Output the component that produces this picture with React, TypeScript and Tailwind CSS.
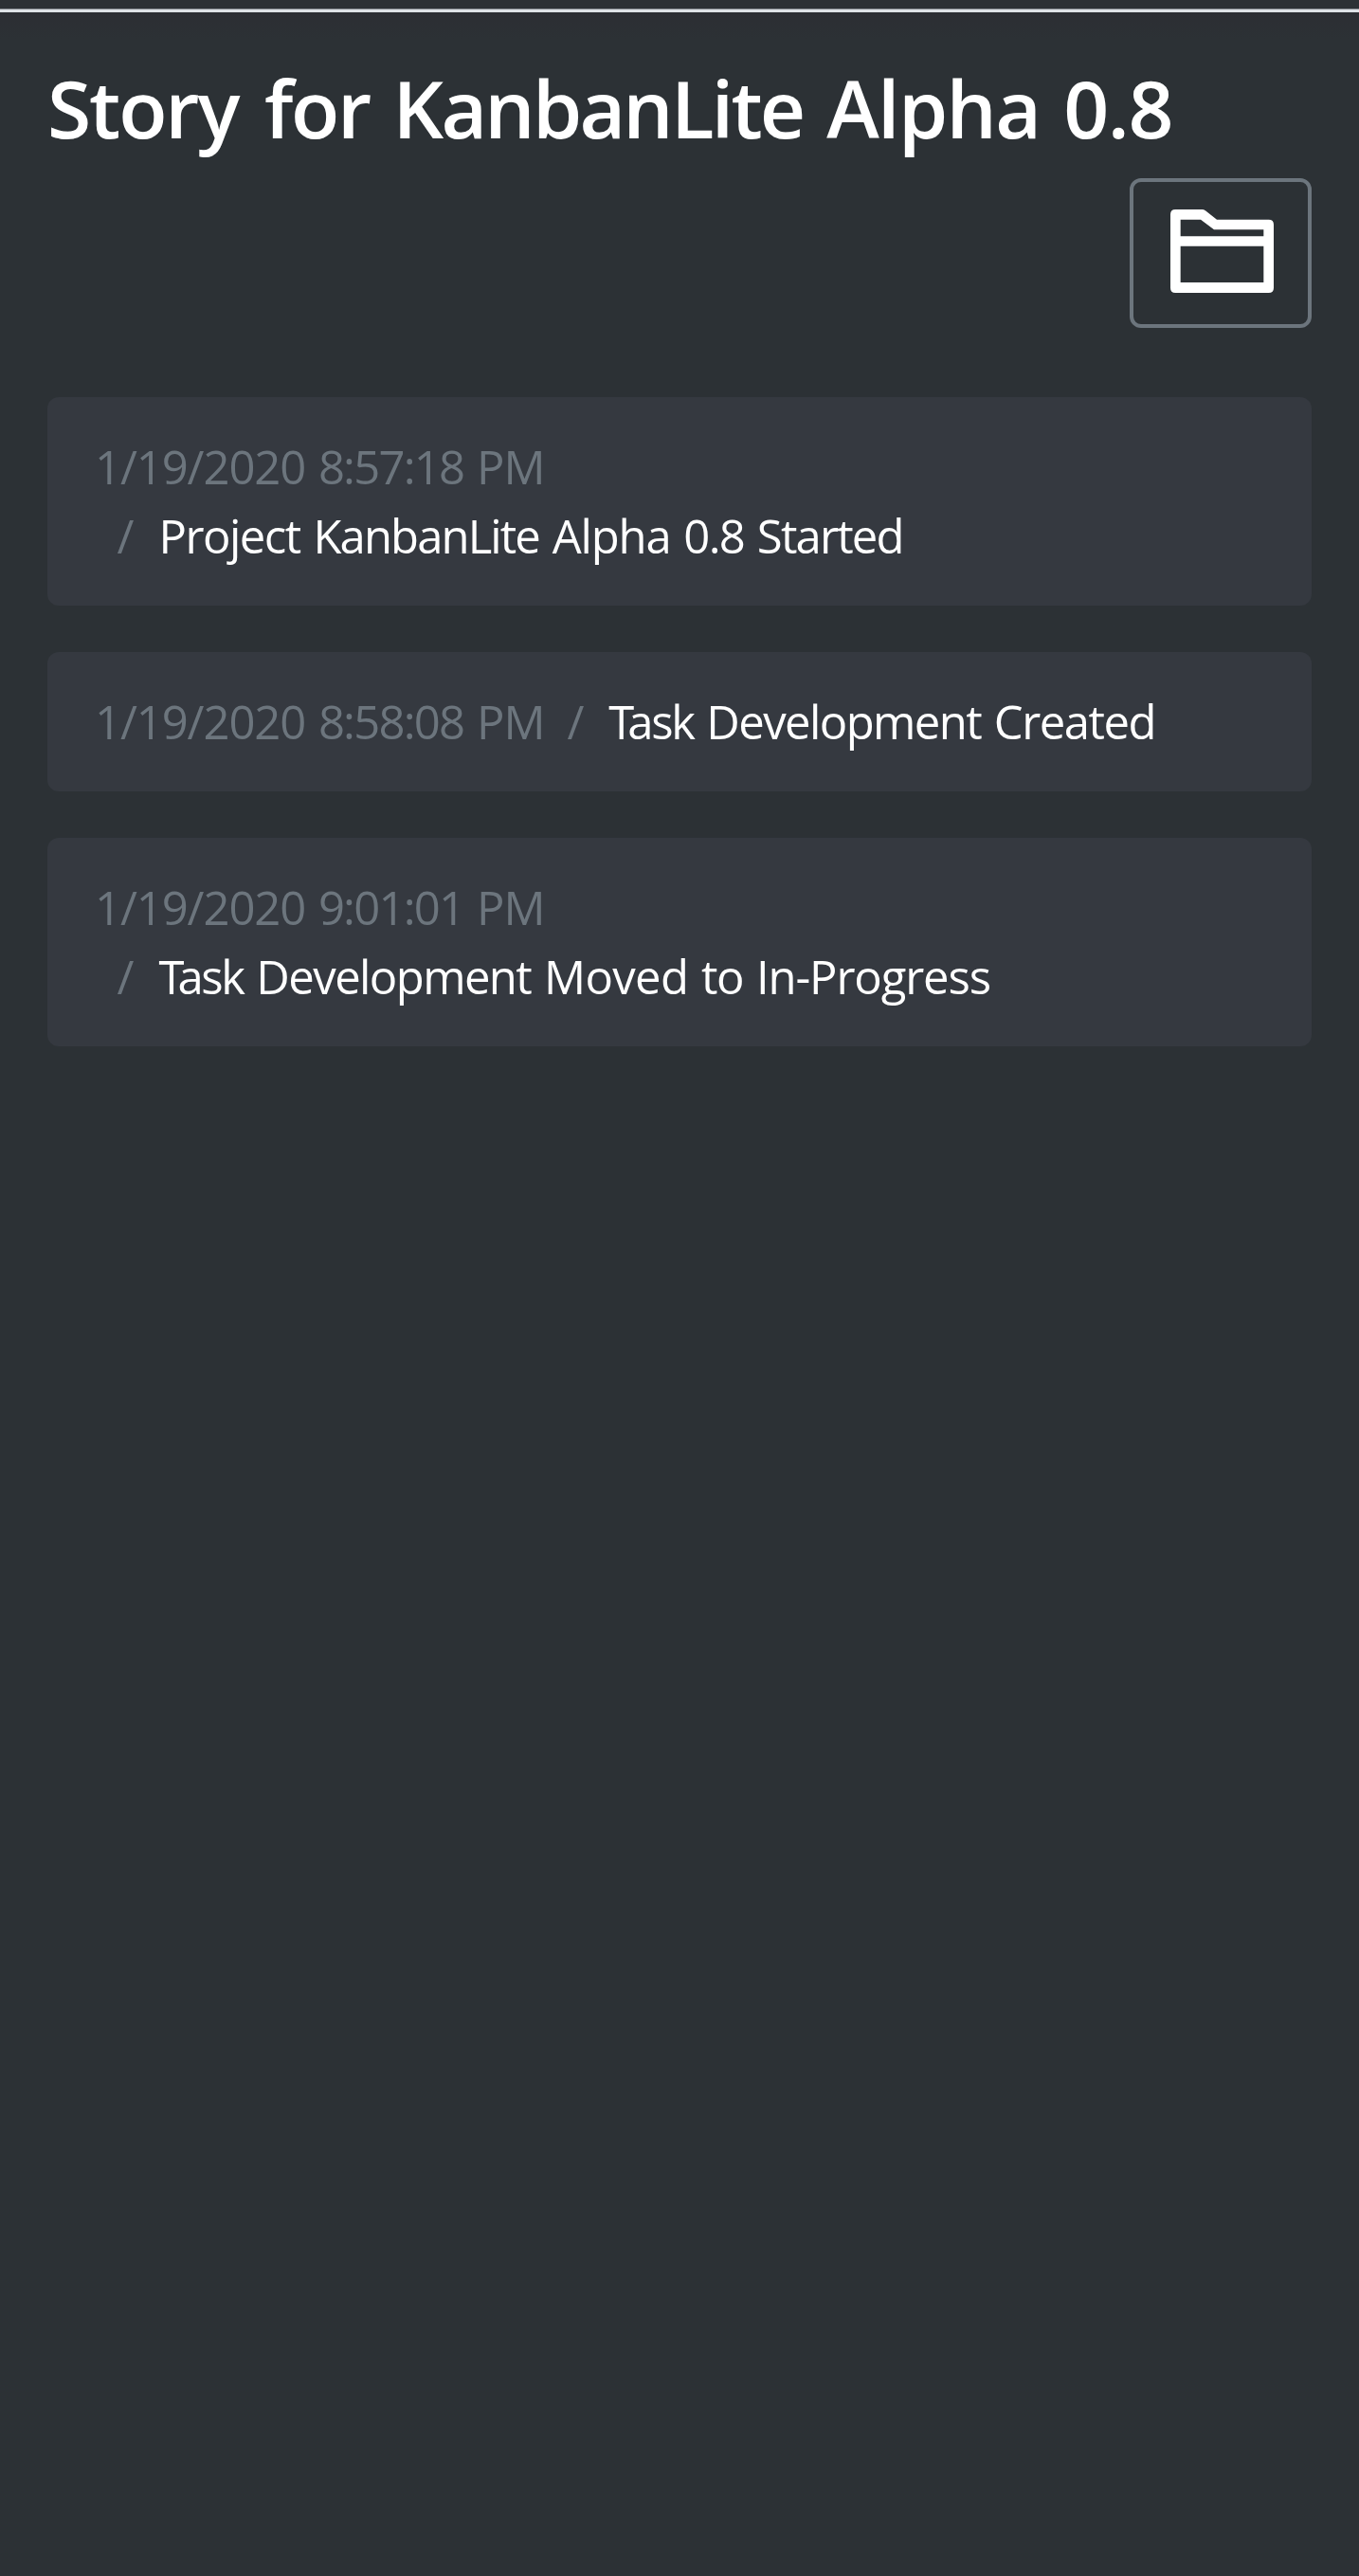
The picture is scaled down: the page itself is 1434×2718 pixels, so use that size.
import type { ReactNode } from "react";

function Word({ tracking, children }: { tracking: string; children: ReactNode }) {
  return <span className={tracking}>{children}</span>;
}

function FolderIcon() {
  return (
    <svg viewBox="0 0 327 264" className="h-[88px] w-[109px]" fill="currentColor" aria-hidden="true">
      <path
        fillRule="evenodd"
        d="M16 0H100Q106 0 111 4L147 32H311Q327 32 327 48V248Q327 264 311 264H16Q0 264 0 248V16Q0 0 16 0ZM32 32V85H295V64H138L96 32ZM32 116V231H295V116Z"
      />
    </svg>
  );
}

function StoryCard({ date, time, timeTracking, tall, children }: {
  date: string;
  time: string;
  timeTracking: string;
  tall: boolean;
  children: ReactNode;
}) {
  return (
    <li
      className={`flex flex-wrap content-start rounded-[12px] bg-[#353940] pt-[36.5px] pr-[50px] pl-[50px] text-[49px] leading-[73.5px] whitespace-nowrap [word-spacing:1px] ${tall ? "h-[220px]" : "h-[147px]"}`}
    >
      <div className="text-[#6c757d]">
        <Word tracking="tracking-[-1.1px]">{date}</Word>{" "}
        <Word tracking={timeTracking}>{time}</Word>{" "}
        <Word tracking="tracking-[-0.8px]">PM</Word>
      </div>
      <div className="ml-[23.5px] flex">
        <span className="mr-[26px] text-[#6c757d]">/</span>
        <p>{children}</p>
      </div>
    </li>
  );
}

function TaskDevelopment() {
  return (
    <>
      <Word tracking="tracking-[-7px]">T</Word>
      <Word tracking="tracking-[-2.4px]">ask</Word>{" "}
      <Word tracking="tracking-[-1.58px]">Development</Word>
    </>
  );
}

export default function App() {
  return (
    <div className="flex h-[2718px] w-full flex-col overflow-hidden bg-[#2c3135] font-['Open_Sans','Noto_Sans',sans-serif] text-white">
      <div className="mt-[9px] h-[4px] shrink-0 border-t border-[#84898f] bg-[#dee2e6]" />
      <div className="flex flex-col bg-linear-to-b from-[#2c2e33] to-[#2c3135] to-[28px] px-[50px] pt-[50px]">
        <h1 className="text-[84px] leading-[101px] font-semibold whitespace-nowrap [word-spacing:2.9px]">
          <Word tracking="mr-[3px] tracking-[-2.11px]">Story</Word>{" "}
          <Word tracking="tracking-[-2.39px]">for</Word>{" "}
          <Word tracking="tracking-[-2.79px]">KanbanLite</Word>{" "}
          <Word tracking="tracking-[-1.61px]">Alpha</Word>{" "}
          <Word tracking="tracking-[-1.4px]">0.8</Word>
        </h1>
        <button
          type="button"
          aria-label="Open project"
          className="mt-[24px] flex h-[157.5px] w-[192.5px] self-end rounded-[12px] border-4 border-[#6c757d] pt-[29px] pl-[39.5px]"
        >
          <FolderIcon />
        </button>
        <ul className="mt-[73.5px] flex flex-col gap-[49px]">
          <StoryCard date="1/19/2020" time="8:57:18" timeTracking="tracking-[-1.79px]" tall>
            <Word tracking="tracking-[-1.5px]">Project</Word>{" "}
            <Word tracking="tracking-[-1.9px]">KanbanLite</Word>{" "}
            <Word tracking="tracking-[-1.15px]">Alpha</Word>{" "}
            <Word tracking="tracking-[-1.71px]">0.8</Word>{" "}
            <Word tracking="tracking-[-1.82px]">Started</Word>
          </StoryCard>
          <StoryCard date="1/19/2020" time="8:58:08" timeTracking="tracking-[-1.79px]" tall={false}>
            <TaskDevelopment /> <Word tracking="tracking-[-1.5px]">Created</Word>
          </StoryCard>
          <StoryCard date="1/19/2020" time="9:01:01" timeTracking="tracking-[-1.79px]" tall>
            <TaskDevelopment />{" "}
            <Word tracking="tracking-[-0.64px]">Moved</Word>{" "}
            <Word tracking="tracking-[-1.4px]">to</Word>{" "}
            <Word tracking="tracking-[-1.12px]">In-Progress</Word>
          </StoryCard>
        </ul>
      </div>
    </div>
  );
}
